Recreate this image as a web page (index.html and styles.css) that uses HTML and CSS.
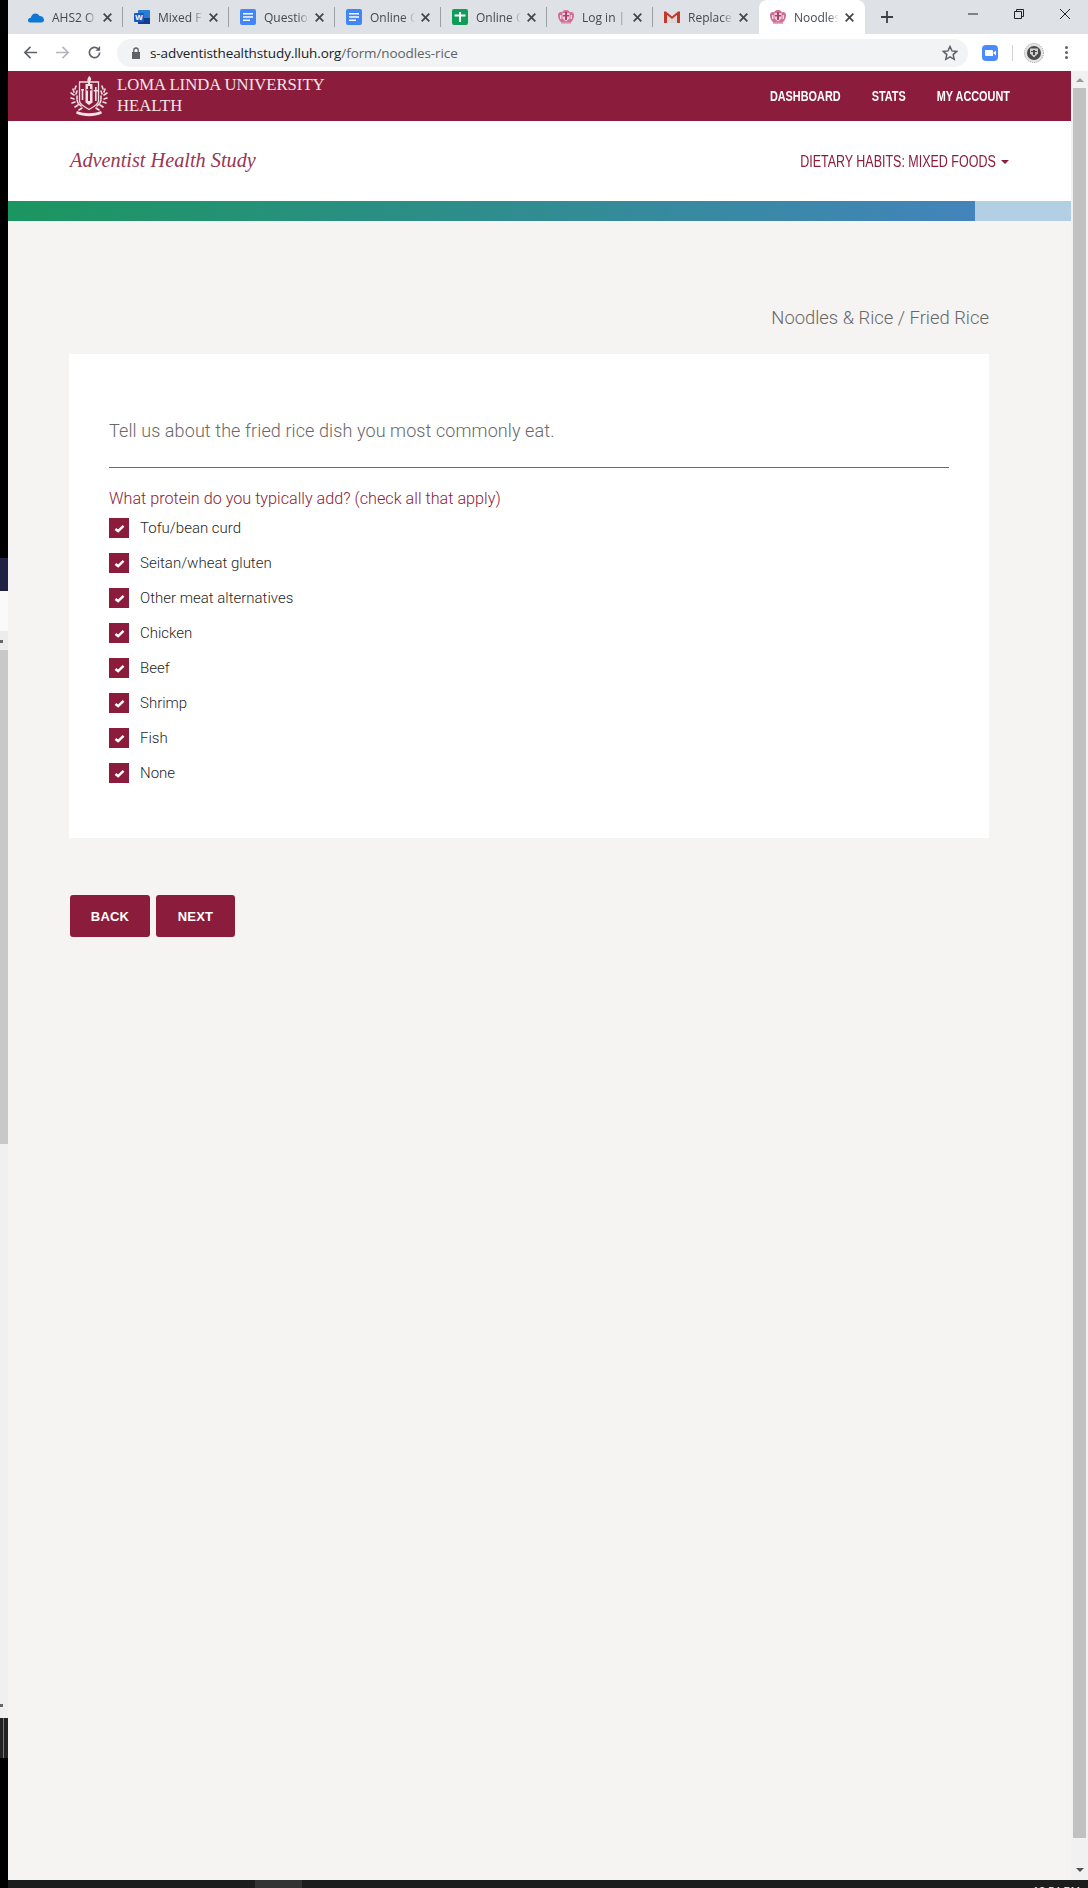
FILE: index.html
```html
<!DOCTYPE html>
<html lang="en">

<head>
    <meta charset="UTF-8">
    <title>Noodles &amp; Rice</title>
    <link rel="stylesheet" href="styles.css">
</head>

<body>
    <svg class="sprites" width="0" height="0">
        <symbol id="crest" viewBox="0 0 16 16">
            <path fill="#cf6f96" d="M0 5.500C1 3 2.500 2.500 4 3.500 5 1.500 6.500 1 8 1s3 .5 4 2.500c1.500-1 3-.5 4 2 0 3.500-1 6-3 7.500v1.500H3V13C1 11.500 0 9 0 5.500z" />
            <path fill="#f3d5e1" d="M2 6h1.500v4H2zM12.500 6H14v4h-1.500zM4.500 4h7v5.500L8 12.500 4.500 9.500z" />
            <path fill="#b03f6e" d="M7 3h2v8H7zM5 6h6v1.500H5z" />
            <path fill="#e9a9c3" d="M3 13.500h10V15H3z" />
        </symbol>
        <symbol id="doc" viewBox="0 0 16 16">
            <rect x="0" y="0" width="16" height="16" rx="2" fill="#4285f4" />
            <path fill="#fff" d="M3 4h10v1.500H3zM3 7.300h10v1.500H3zM3 10.600h7v1.500H3z" />
        </symbol>
        <symbol id="x" viewBox="0 0 9 9">
            <path fill="none" stroke="#45494e" stroke-width="1.800" d="M.7.7l7.600 7.600M8.300.7L.7 8.300" />
        </symbol>
    </svg>

    <!-- what shows of the desktop to the left of the window -->
    <div class="desk-strip">
        <div class="strip-black"></div>
        <div class="strip-navy"></div>
        <div class="strip-white"></div>
        <div class="strip-arrow"></div>
        <div class="strip-thumb"></div>
        <div class="strip-track"></div>
        <div class="strip-dark"></div>
        <div class="strip-end"></div>
    </div>

    <div class="browser">
        <div class="tab-bar">
            <div class="tab">
                <svg class="tab-icon" viewBox="0 0 16 16"><path fill="#0f78d4" d="M0 11.500C0 9.800 1.300 8.800 2.800 8.800 3.200 6.500 5 4.500 7.500 4.500c1.800 0 3.300 1 4 2.500 2.300-.2 4.500 1.500 4.500 4 0 1.500-1 2.500-2.500 2.500H2C.8 13.500 0 12.700 0 11.500z" /></svg>
                <span class="tab-text">AHS2 O</span>
                <svg class="tab-close"><use href="#x" /></svg>
            </div>
            <div class="tab">
                <svg class="tab-icon" viewBox="0 0 16 16"><rect x="4" y="1" width="12" height="14" rx="1" fill="#2b7cd3" /><rect x="4" y="9" width="12" height="6" fill="#103f91" /><rect x="0" y="4" width="10" height="9" rx="1" fill="#185abd" /><text x="5" y="11.300" class="word-w">W</text></svg>
                <span class="tab-text">Mixed F</span>
                <svg class="tab-close"><use href="#x" /></svg>
            </div>
            <div class="tab">
                <svg class="tab-icon"><use href="#doc" /></svg>
                <span class="tab-text">Question</span>
                <svg class="tab-close"><use href="#x" /></svg>
            </div>
            <div class="tab">
                <svg class="tab-icon"><use href="#doc" /></svg>
                <span class="tab-text">Online C</span>
                <svg class="tab-close"><use href="#x" /></svg>
            </div>
            <div class="tab">
                <svg class="tab-icon" viewBox="0 0 16 16"><rect width="16" height="16" rx="2" fill="#0f9d58" /><path fill="#fff" d="M7 3h2v2.500h4.500v2H9V13H7V7.500H2.500v-2H7z" /></svg>
                <span class="tab-text">Online C</span>
                <svg class="tab-close"><use href="#x" /></svg>
            </div>
            <div class="tab">
                <svg class="tab-icon"><use href="#crest" /></svg>
                <span class="tab-text">Log in |</span>
                <svg class="tab-close"><use href="#x" /></svg>
            </div>
            <div class="tab">
                <svg class="tab-icon" viewBox="0 0 16 16"><path fill="#d9d9d9" d="M3 4l5 4 5-4v10H3z" /><path fill="#c5392b" d="M0 2.500h2l6 5 6-5h2V14h-3V6L8 10 3 6v8H0z" /></svg>
                <span class="tab-text">Replace</span>
                <svg class="tab-close"><use href="#x" /></svg>
            </div>
            <div class="tab tab-active">
                <svg class="tab-icon"><use href="#crest" /></svg>
                <span class="tab-text">Noodles</span>
                <svg class="tab-close"><use href="#x" /></svg>
            </div>
            <svg class="new-tab" viewBox="0 0 12 12"><path d="M6 0v12M0 6h12" /></svg>
            <div class="win-buttons">
                <svg viewBox="0 0 10 10"><path d="M0 5h10" /></svg>
                <svg viewBox="0 0 10 10"><path d="M.5 2.500h7v7h-7zM2.500 2.500v-2h7v7h-2" /></svg>
                <svg viewBox="0 0 10 10"><path d="M0 0l10 10M10 0L0 10" /></svg>
            </div>
        </div>

        <div class="toolbar">
            <svg class="tool-icon" viewBox="0 0 16 16"><path d="M15 8H2M8 2L2 8l6 6" /></svg>
            <svg class="tool-icon tool-off" viewBox="0 0 16 16"><path d="M1 8h13M8 2l6 6-6 6" /></svg>
            <svg class="tool-icon tool-last" viewBox="0 0 16 16"><path d="M13.500 8a5.500 5.500 0 1 1-1.600-3.900" /><path class="solid" d="M14 1v5H9z" /></svg>
            <div class="address">
                <svg class="lock" viewBox="0 0 10 12"><path fill="#5f6368" d="M1 5h8v7H1z" /><path fill="none" stroke="#5f6368" stroke-width="1.300" d="M2.800 5V3.200a2.200 2.200 0 0 1 4.400 0V5" /></svg>
                <span class="url"><b>s-adventisthealthstudy.lluh.org</b>/form/noodles-rice</span>
                <svg class="star" viewBox="0 0 16 16"><path d="M8 1.500l2 4.400 4.700.5-3.500 3.200 1 4.700L8 11.900l-4.200 2.400 1-4.700L1.300 6.400 6 5.900z" /></svg>
            </div>
            <svg class="zoom-ext" viewBox="0 0 16 16"><rect width="16" height="16" rx="4" fill="#4a8cff" /><path fill="#fff" d="M3 5h7a1 1 0 0 1 1 1v5H4a1 1 0 0 1-1-1zM11.500 7.500L14 5.500v5l-2.500-2z" /></svg>
            <span class="tool-sep"></span>
            <svg class="avatar" viewBox="0 0 20 20"><circle cx="10" cy="10" r="9.500" fill="#e4e4e4" stroke="#9a9a9a" stroke-dasharray="1 1" /><circle cx="10" cy="10" r="7" fill="#4a4a4a" /><path fill="#d0d0d0" d="M6 5.500h8v5l-4 4-4-4z" /><path fill="#4a4a4a" d="M9 7h2v5H9zM7 8h6v1H7z" /></svg>
            <div class="dots"><i></i><i></i><i></i></div>
        </div>

        <div class="viewport">
            <div class="page">
                <header class="top-bar">
                    <a class="brand" href="#">
                        <svg class="seal" viewBox="0 0 40 42">
                            <g fill="none" stroke="#f0dfe4" stroke-width="1.600" stroke-linecap="round">
                                <path d="M7 11l-1 3M4 14l1 3M2 18l3 2M8 16l-1 3M2 23l3 1M8 21v3M3 28l3-1M8 25l1 3M6 32l3-2M10 29l2 2M10 35l3-2" />
                                <path d="M33 11l1 3M36 14l-1 3M38 18l-3 2M32 16l1 3M38 23l-3 1M32 21v3M37 28l-3-1M32 25l-1 3M34 32l-3-2M30 29l-2 2M30 35l-3-2" />
                            </g>
                            <path fill="#8c1c3b" stroke="#f0dfe4" stroke-width="1.300" d="M10.500 7h19v19c0 3-5 6-9.500 8.500C15.500 32 10.500 29 10.500 26z" />
                            <path fill="#f0dfe4" d="M20 1c2 1 3 3 1.500 5 0 1-.5 2-.5 3h-2c0-2-1-3-.5-5 .5-1 1-2 1.500-3zM16.500 9h7v18.500L20 30l-3.500-2.500z" />
                            <path fill="#8c1c3b" d="M19 11h2v15h-2zM17.500 14h5v1.500h-5z" />
                            <path fill="#f0dfe4" d="M12 14h3v1.500h-3zM12.700 15.500h1.600V25h-1.600zM26 12h1.600v14H26zM24.700 15h4.300v1.500h-4.300z" />
                            <path fill="#f0dfe4" d="M8 36c7 3 17 3 24 0l1 2.500c-8 3.500-18 3.500-26 0z" />
                        </svg>
                        <span class="brand-name">LOMA LINDA UNIVERSITY<br>HEALTH</span>
                    </a>
                    <nav class="top-nav">
                        <a href="#">DASHBOARD</a>
                        <a href="#">STATS</a>
                        <a href="#">MY ACCOUNT</a>
                    </nav>
                </header>

                <div class="sub-bar">
                    <div class="study-name">Adventist Health Study</div>
                    <a class="section-menu" href="#"><span class="section-label">DIETARY HABITS: MIXED FOODS</span><span class="caret"></span></a>
                </div>

                <div class="progress">
                    <div class="progress-done"></div>
                </div>

                <main class="content">
                    <h2 class="crumb">Noodles &amp; Rice / Fried Rice</h2>
                    <section class="card">
                        <p class="intro">Tell us about the fried rice dish you most commonly eat.</p>
                        <p class="question">What protein do you typically add? (check all that apply)</p>
                        <ul class="options">
                            <li><span class="check"><svg viewBox="0 0 12 10"><path d="M1.500 5.500l3 2.500 6-6" /></svg></span>Tofu/bean curd</li>
                            <li><span class="check"><svg viewBox="0 0 12 10"><path d="M1.500 5.500l3 2.500 6-6" /></svg></span>Seitan/wheat gluten</li>
                            <li><span class="check"><svg viewBox="0 0 12 10"><path d="M1.500 5.500l3 2.500 6-6" /></svg></span>Other meat alternatives</li>
                            <li><span class="check"><svg viewBox="0 0 12 10"><path d="M1.500 5.500l3 2.500 6-6" /></svg></span>Chicken</li>
                            <li><span class="check"><svg viewBox="0 0 12 10"><path d="M1.500 5.500l3 2.500 6-6" /></svg></span>Beef</li>
                            <li><span class="check"><svg viewBox="0 0 12 10"><path d="M1.500 5.500l3 2.500 6-6" /></svg></span>Shrimp</li>
                            <li><span class="check"><svg viewBox="0 0 12 10"><path d="M1.500 5.500l3 2.500 6-6" /></svg></span>Fish</li>
                            <li><span class="check"><svg viewBox="0 0 12 10"><path d="M1.500 5.500l3 2.500 6-6" /></svg></span>None</li>
                        </ul>
                    </section>
                    <div class="buttons">
                        <a class="btn" href="#">BACK</a>
                        <a class="btn btn-next" href="#">NEXT</a>
                    </div>
                </main>
            </div>

            <div class="scrollbar">
                <span class="arrow-up"></span>
                <div class="scroll-thumb"></div>
                <span class="arrow-down"></span>
            </div>
        </div>

        <div class="taskbar">
            <span class="task-active"></span>
            <span class="clock">12:54 PM</span>
        </div>
    </div>
</body>

</html>
```

FILE: styles.css
```css
* {
    padding: 0;
    margin: 0;
    box-sizing: border-box;
}

body {
    display: flex;
    width: 1088px;
    height: 1888px;
    overflow: hidden;
    font-family: Roboto, "Liberation Sans", sans-serif;
    background: #000;
}

a {
    text-decoration: none;
    color: inherit;
}

.sprites {
    position: absolute;
}

/* left edge */
.desk-strip {
    width: 8px;
    display: flex;
    flex-direction: column;
    flex: none;
}

.strip-black { height: 558px; background: #000; }
.strip-navy { height: 33px; background: #1f2244; }
.strip-white { height: 40px; background: #fafafa; }
.strip-arrow { height: 19px; background: linear-gradient(#666, #666) 0 9px / 3px 3px no-repeat #ececec; }
.strip-thumb { height: 494px; background: #c8c8c8; }
.strip-track { height: 574px; background: linear-gradient(#666, #666) 0 560px / 3px 3px no-repeat #f0f0f0; }
.strip-dark { height: 40px; background: linear-gradient(90deg, #222 3px, #777 3px, #777 4px, #222 4px); }
.strip-end { flex: 1; background: #000; }

.browser {
    flex: 1;
    display: flex;
    flex-direction: column;
    min-width: 0;
}

/* tabs */
.tab-bar {
    height: 34px;
    display: flex;
    align-items: stretch;
    padding-left: 9px;
    background: #dee1e6;
    font-family: "Open Sans", sans-serif;
    font-size: 12px;
    color: #45494e;
}

.tab {
    width: 106px;
    display: flex;
    align-items: center;
    padding-left: 11px;
    position: relative;
    flex: none;
}

.tab::after {
    content: "";
    position: absolute;
    right: 0;
    top: 7px;
    height: 20px;
    width: 1px;
    background: #9aa0a6;
}

.tab:nth-child(7)::after,
.tab-active::after {
    display: none;
}

.tab-active {
    background: #fff;
    border-radius: 8px 8px 0 0;
}

.tab-icon {
    width: 16px;
    height: 16px;
    flex: none;
}

.word-w {
    font-family: "Liberation Sans", sans-serif;
    font-size: 8px;
    font-weight: 700;
    fill: #fff;
    text-anchor: middle;
}

.tab-text {
    width: 45px;
    margin-left: 8px;
    overflow: hidden;
    white-space: nowrap;
    -webkit-mask-image: linear-gradient(90deg, #000 75%, transparent);
    mask-image: linear-gradient(90deg, #000 75%, transparent);
}

.tab-close {
    width: 9px;
    height: 9px;
    margin-left: 6px;
    flex: none;
}

.new-tab {
    width: 12px;
    height: 12px;
    margin: 11px 0 0 16px;
    fill: none;
    stroke: #3c4043;
    stroke-width: 1.800;
}

.win-buttons {
    margin-left: auto;
    display: flex;
    gap: 36px;
    padding: 9px 18px 0 0;
}

.win-buttons svg {
    width: 10px;
    height: 10px;
    fill: none;
    stroke: #222;
    stroke-width: 1;
}

/* address row */
.toolbar {
    height: 37px;
    display: flex;
    align-items: center;
    padding-left: 15px;
    background: #fff;
}

.tool-icon {
    width: 15px;
    height: 15px;
    margin-right: 17px;
    fill: none;
    stroke: #5f6368;
    stroke-width: 1.800;
    flex: none;
}

.tool-last {
    margin-right: 15px;
}

.tool-icon .solid {
    fill: #5f6368;
    stroke: none;
}

.tool-off {
    stroke: #b4b7bb;
}

.address {
    width: 851px;
    height: 28px;
    display: flex;
    align-items: center;
    padding-left: 14px;
    background: #f1f3f4;
    border-radius: 14px;
    flex: none;
}

.lock {
    width: 10px;
    height: 12px;
}

.url {
    margin-left: 9px;
    font-family: "Open Sans", sans-serif;
    font-size: 13.500px;
    letter-spacing: -.1px;
    color: #5f6368;
    white-space: nowrap;
}

.url b {
    font-weight: 400;
    color: #202124;
}

.star {
    width: 16px;
    height: 16px;
    margin-left: auto;
    margin-right: 10px;
    fill: none;
    stroke: #5f6368;
    stroke-width: 1.500;
}

.zoom-ext {
    width: 16px;
    height: 16px;
    margin-left: 14px;
    flex: none;
}

.tool-sep {
    width: 1px;
    height: 16px;
    margin-left: 14px;
    background: #d0d2d5;
}

.avatar {
    width: 20px;
    height: 20px;
    margin-left: 11px;
}

.dots {
    margin-left: 21px;
    display: flex;
    flex-direction: column;
    gap: 2px;
}

.dots i {
    width: 3px;
    height: 3px;
    border-radius: 50%;
    background: #5f6368;
}

/* page */
.viewport {
    height: 1809px;
    display: flex;
}

.page {
    flex: 1;
    min-width: 0;
    background: #f5f4f2;
}

.top-bar {
    height: 50px;
    display: flex;
    align-items: center;
    justify-content: space-between;
    padding: 0 61px;
    background: #8c1c3b;
    color: #fff;
}

.brand {
    display: flex;
    align-items: center;
    gap: 8px;
}

.seal {
    width: 40px;
    height: 42px;
}

.brand-name {
    font-family: "Liberation Serif", serif;
    font-size: 16.700px;
    line-height: 21px;
    padding-bottom: 2px;
    color: #f3e6ea;
}

/* no condensed family here, so squeeze the bold sans */
.top-nav {
    display: flex;
    gap: 40px;
    font-family: "Liberation Sans", sans-serif;
    font-size: 14px;
    font-weight: 700;
    padding-bottom: 1px;
    transform: scaleX(.777);
    transform-origin: right center;
}

.sub-bar {
    height: 80px;
    display: flex;
    justify-content: space-between;
    align-items: center;
    padding: 0 62px;
    background: #fff;
    color: #8c1c3b;
}

.study-name {
    font-family: "Liberation Serif", serif;
    font-style: italic;
    font-size: 20.300px;
    margin-bottom: 1px;
    color: #9a3552;
}

.section-menu {
    display: flex;
    align-items: center;
    margin-bottom: -1px;
}

.section-label {
    font-family: "Liberation Sans", sans-serif;
    font-size: 16px;
    white-space: nowrap;
    transform: scaleX(.78);
    transform-origin: right center;
}

.caret {
    margin-left: 5px;
    border-top: 4px solid #8c1c3b;
    border-left: 4px solid transparent;
    border-right: 4px solid transparent;
}

.progress {
    height: 20px;
    background: #b2cfe4;
}

.progress-done {
    width: 967px;
    height: 100%;
    background: linear-gradient(90deg, #1b9660, #4384bb);
}

.content {
    padding: 85px 82px 0 61px;
}

.crumb {
    font-size: 18.400px;
    font-weight: 300;
    line-height: 24px;
    text-align: right;
    color: #6a6767;
    margin-bottom: 24px;
}

.card {
    height: 484px;
    padding: 65px 40px 0;
    background: #fff;
}

.intro {
    padding-bottom: 24px;
    border-bottom: 1px solid #6b6b6b;
    font-size: 18px;
    font-weight: 300;
    letter-spacing: .1px;
    line-height: 24px;
    color: #6a6767;
}

.question {
    margin-top: 21px;
    font-size: 16.200px;
    font-weight: 300;
    line-height: 20px;
    color: #8c1c3b;
}

.options {
    list-style: none;
    margin-top: 9px;
    display: flex;
    flex-direction: column;
    gap: 15px;
}

.options li {
    height: 20px;
    display: flex;
    align-items: center;
    gap: 11px;
    font-size: 15px;
    font-weight: 300;
    color: #1f1f1f;
}

.check {
    width: 20px;
    height: 20px;
    display: flex;
    align-items: center;
    justify-content: center;
    background: #8c1c3b;
}

.check svg {
    width: 11px;
    height: 9px;
    fill: none;
    stroke: #fff;
    stroke-width: 2.700;
}

.buttons {
    margin: 57px 0 0 1px;
    display: flex;
    gap: 6px;
}

.btn {
    width: 80px;
    height: 42px;
    display: flex;
    align-items: center;
    justify-content: center;
    background: #8c1c3b;
    border-radius: 3px;
    font-family: "Liberation Sans", sans-serif;
    font-size: 13px;
    font-weight: 700;
    letter-spacing: .2px;
    color: #fff;
}

.btn-next {
    width: 79px;
}

/* window scrollbar */
.scrollbar {
    width: 17px;
    flex: none;
    display: flex;
    flex-direction: column;
    align-items: center;
    padding-top: 7px;
    background: #f1f1f1;
}

.arrow-up {
    border-bottom: 4px solid #9a9a9a;
    border-left: 4px solid transparent;
    border-right: 4px solid transparent;
}

.scroll-thumb {
    width: 13px;
    height: 1750px;
    margin-top: 6px;
    background: #c1c1c1;
}

.arrow-down {
    margin-top: 30px;
    border-top: 4px solid #505050;
    border-left: 4px solid transparent;
    border-right: 4px solid transparent;
}

/* bottom edge */
.taskbar {
    height: 8px;
    display: flex;
    overflow: hidden;
    padding-left: 247px;
    background: #1c1c1c;
}

.task-active {
    width: 47px;
    background: #333;
}

.clock {
    margin-left: auto;
    padding: 5px 8px 0 0;
    font-family: "Liberation Sans", sans-serif;
    font-size: 11px;
    line-height: 13px;
    color: #eee;
}
```
